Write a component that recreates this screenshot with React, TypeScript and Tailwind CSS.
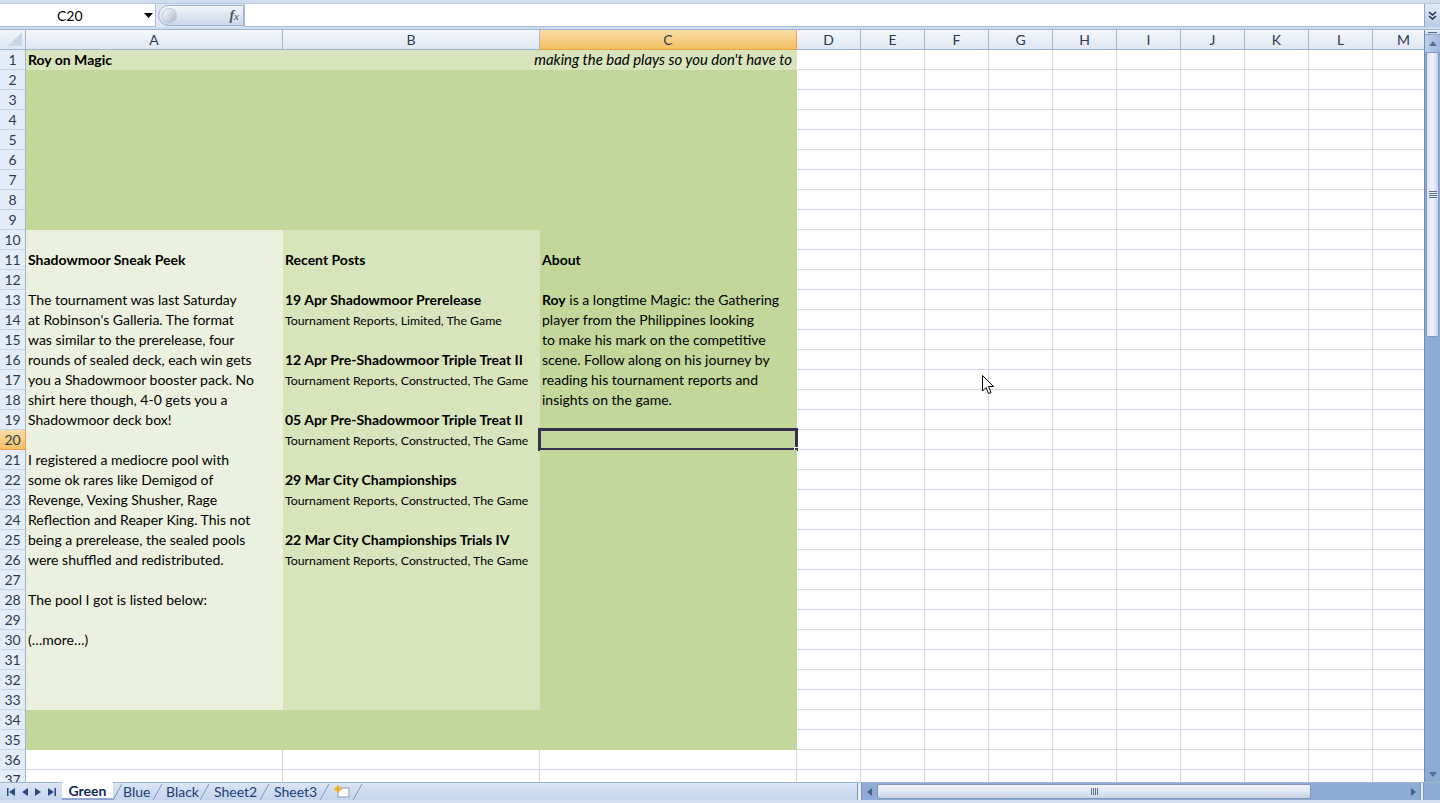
import React from "react";

type Kind = "b" | "s" | "i" | "n";
type CellDef = { k: Kind; t: React.ReactNode };
type RowDef = { A?: CellDef; B?: CellDef; C?: CellDef };

const ROWS: Record<number, RowDef> = {
  1: { A: { k: "b", t: "Roy on Magic" }, C: { k: "i", t: "making the bad plays so you don't have to" } },
  11: { A: { k: "b", t: "Shadowmoor Sneak Peek" }, B: { k: "b", t: "Recent Posts" }, C: { k: "b", t: "About" } },
  13: {
    A: { k: "n", t: "The tournament was last Saturday" },
    B: { k: "b", t: "19 Apr Shadowmoor Prerelease" },
    C: { k: "n", t: (<><span className="font-bold">Roy</span> is a longtime Magic: the Gathering</>) },
  },
  14: {
    A: { k: "n", t: "at Robinson's Galleria. The format" },
    B: { k: "s", t: "Tournament Reports, Limited, The Game" },
    C: { k: "n", t: "player from the Philippines looking" },
  },
  15: { A: { k: "n", t: "was similar to the prerelease, four" }, C: { k: "n", t: "to make his mark on the competitive" } },
  16: {
    A: { k: "n", t: "rounds of sealed deck, each win gets" },
    B: { k: "b", t: "12 Apr Pre-Shadowmoor Triple Treat II" },
    C: { k: "n", t: "scene. Follow along on his journey by" },
  },
  17: {
    A: { k: "n", t: "you a Shadowmoor booster pack. No" },
    B: { k: "s", t: "Tournament Reports, Constructed, The Game" },
    C: { k: "n", t: "reading his tournament reports and" },
  },
  18: { A: { k: "n", t: "shirt here though, 4-0 gets you a" }, C: { k: "n", t: "insights on the game." } },
  19: { A: { k: "n", t: "Shadowmoor deck box!" }, B: { k: "b", t: "05 Apr Pre-Shadowmoor Triple Treat II" } },
  20: { B: { k: "s", t: "Tournament Reports, Constructed, The Game" } },
  21: { A: { k: "n", t: "I registered a mediocre pool with" } },
  22: { A: { k: "n", t: "some ok rares like Demigod of" }, B: { k: "b", t: "29 Mar City Championships" } },
  23: { A: { k: "n", t: "Revenge, Vexing Shusher, Rage" }, B: { k: "s", t: "Tournament Reports, Constructed, The Game" } },
  24: { A: { k: "n", t: "Reflection and Reaper King. This not" } },
  25: { A: { k: "n", t: "being a prerelease, the sealed pools" }, B: { k: "b", t: "22 Mar City Championships Trials IV" } },
  26: { A: { k: "n", t: "were shuffled and redistributed." }, B: { k: "s", t: "Tournament Reports, Constructed, The Game" } },
  28: { A: { k: "n", t: "The pool I got is listed below:" } },
  30: { A: { k: "n", t: "(…more…)" } },
};

const SMALL_COLS = ["D", "E", "F", "G", "H", "I", "J", "K", "L"];

function bgFor(r: number, c: "A" | "B" | "C"): string {
  if (r === 1) return "bg-[#d8e4bc] border-[#d8e4bc]";
  if ((r >= 2 && r <= 9) || r === 34 || r === 35) return "bg-[#c4d79b] border-[#c4d79b]";
  if (r >= 10 && r <= 33) {
    if (c === "A") return "bg-[#ebf1de] border-[#ebf1de]";
    if (c === "B") return "bg-[#d8e4bc] border-[#d8e4bc]";
    return "bg-[#c4d79b] border-[#c4d79b]";
  }
  return "bg-white border-[#d0d7e5]";
}

function Txt({ d }: { d: CellDef }) {
  const cls =
    d.k === "b"
      ? "font-bold text-[14px]"
      : d.k === "s"
      ? "text-[12.3px] translate-y-[2px]"
      : d.k === "i"
      ? "italic text-[14.9px]"
      : "text-[14px]";
  return <span className={`whitespace-nowrap text-black ${cls}`}>{d.t}</span>;
}

function Corner() {
  return (
    <div className="w-[26px] shrink-0 h-full bg-gradient-to-b from-[#f3f6fb] to-[#dde6f2] border-r border-b border-[#9eb6ce] relative flex items-end justify-end p-[3px]">
      <svg width="14" height="14" viewBox="0 0 14 14">
        <polygon points="14,0 14,14 0,14" fill="#c9d6e6" />
      </svg>
    </div>
  );
}

function ColHeader() {
  return (
    <div className="flex h-[20px] text-[14px] text-[#2d3a4d]">
      <Corner />
      <div className="w-[257px] shrink-0 border-r border-b border-[#9eb6ce] bg-gradient-to-b from-[#f5f8fc] to-[#dfe7f2] flex items-center justify-center">A</div>
      <div className="w-[257px] shrink-0 border-r border-b border-[#9eb6ce] bg-gradient-to-b from-[#f5f8fc] to-[#dfe7f2] flex items-center justify-center">B</div>
      <div className="w-[257px] shrink-0 border-r border-b border-[#f29d49] bg-gradient-to-b from-[#f9dca6] to-[#f2c15f] flex items-center justify-center">C</div>
      {SMALL_COLS.map((c) => (
        <div key={c} className="w-[64px] shrink-0 border-r border-b border-[#9eb6ce] bg-gradient-to-b from-[#f5f8fc] to-[#dfe7f2] flex items-center justify-center">
          {c}
        </div>
      ))}
      <div className="flex-1 border-b border-[#9eb6ce] bg-gradient-to-b from-[#f5f8fc] to-[#dfe7f2] flex items-center justify-center pl-[10px]">M</div>
    </div>
  );
}

function Row({ r }: { r: number }) {
  const def = ROWS[r] || {};
  const selected = r === 20;
  return (
    <div className="flex h-[20px] shrink-0">
      <div
        className={
          selected
            ? "w-[26px] shrink-0 h-full border-r border-b border-[#f29d49] bg-gradient-to-b from-[#f9dca6] to-[#f2c15f] flex items-center justify-center text-[14px] text-[#2d3a4d]"
            : "w-[26px] shrink-0 h-full border-r border-b border-r-[#9eb6ce] border-b-[#c5d3e6] bg-[#e4ecf7] flex items-center justify-center text-[14px] text-[#2d3a4d]"
        }
      >
        {r}
      </div>
      <div className={`w-[257px] shrink-0 h-full border-r border-b flex items-center pl-[2px] ${bgFor(r, "A")}`}>
        {def.A && <Txt d={def.A} />}
      </div>
      <div className={`w-[257px] shrink-0 h-full border-r border-b flex items-center pl-[2px] ${bgFor(r, "B")}`}>
        {def.B && <Txt d={def.B} />}
      </div>
      <div
        className={`relative w-[257px] shrink-0 h-full border-r border-b flex items-center ${
          r === 1 ? "justify-end pr-[4px]" : "pl-[2px]"
        } ${bgFor(r, "C")}`}
      >
        {def.C && <Txt d={def.C} />}
        {selected && (
          <>
            <div className="absolute left-[-2px] top-[-2px] w-[260px] h-[23px] border-[3px] border-[#35304f]" />
            <div className="absolute left-[254px] top-[17px] w-[5px] h-[5px] bg-[#35304f] border border-white" />
          </>
        )}
      </div>
      {SMALL_COLS.map((c) => (
        <div key={c} className="w-[64px] shrink-0 h-full border-r border-b bg-white border-[#d0d7e5]" />
      ))}
      <div className="flex-1 h-full border-b bg-white border-[#d0d7e5]" />
    </div>
  );
}

function TopBar() {
  return (
    <div className="h-[30px] shrink-0 bg-[#cfddef] pt-[3px] border-b border-[#9eb6ce]">
      <div className="h-[24px] flex bg-[#dfe8f5] border-t border-[#b7c9e2]">
        <div className="w-[156px] shrink-0 bg-white border-r border-b border-[#a9bfd9] relative flex items-center">
          <span className="absolute left-[57px] text-[14px] text-black">C20</span>
          <svg className="absolute left-[144px] top-[9px]" width="9" height="5" viewBox="0 0 9 5">
            <polygon points="0,0 9,0 4.5,5" fill="#000" />
          </svg>
        </div>
        <div className="w-[88px] shrink-0 pl-[2px] py-[1px]">
          <div className="h-full rounded-l-full bg-gradient-to-b from-[#f4f7fb] to-[#c8d6e9] border border-[#9fb3cf] relative flex items-center">
            <div className="absolute left-[3px] top-[2px] w-[15px] h-[15px] rounded-full bg-gradient-to-br from-[#ffffff] to-[#aab7c9] border border-[#b9c5d6]" />
            <span className="absolute right-[4px] text-[14px] italic text-[#4a4f58]" style={{ fontFamily: '"Liberation Serif", serif' }}>
              <span className="font-bold">f</span>
              <span className="text-[11px]">x</span>
            </span>
          </div>
        </div>
        <div className="flex-1 bg-white border-l border-b border-[#a9bfd9]" />
        <div className="w-[16px] shrink-0 bg-gradient-to-b from-[#e3ecf8] to-[#b8cbe6] border-l border-[#8ea6c8] flex items-center justify-center">
          <svg width="9" height="10" viewBox="0 0 9 10">
            <polyline points="1,1 4.5,4 8,1" fill="none" stroke="#1c2d4a" strokeWidth="1.5" />
            <polyline points="1,5 4.5,8 8,5" fill="none" stroke="#1c2d4a" strokeWidth="1.5" />
          </svg>
        </div>
      </div>
    </div>
  );
}

function VScroll() {
  return (
    <div className="w-[16px] shrink-0 h-full flex flex-col bg-[#8eabd6] border-l border-[#6f8bb5]">
      <div className="h-[5px] shrink-0 bg-gradient-to-b from-[#eef3fa] to-[#c6d5ea] border-b border-[#8ea6c8] flex items-center justify-center">
        <div className="w-[9px] h-[1px] bg-[#56698a]" />
      </div>
      <div className="h-[17px] shrink-0 bg-gradient-to-r from-[#bfd0e8] to-[#9fb8de] flex items-center justify-center">
        <svg width="8" height="5" viewBox="0 0 8 5">
          <polygon points="0,5 8,5 4,0" fill="#5d6f8f" />
        </svg>
      </div>
      <div className="h-[285px] shrink-0 mx-[1px] rounded-[2px] bg-gradient-to-r from-[#dde7f5] via-[#eef3fa] to-[#c9d7ec] border border-[#8496b8] flex items-center justify-center">
        <div className="flex flex-col gap-[1px]">
          <div className="w-[8px] h-[1px] bg-[#5a6c8c]" />
          <div className="w-[8px] h-[1px] bg-[#5a6c8c]" />
          <div className="w-[8px] h-[1px] bg-[#5a6c8c]" />
          <div className="w-[8px] h-[1px] bg-[#5a6c8c]" />
        </div>
      </div>
      <div className="flex-1" />
      <div className="h-[16px] shrink-0 flex items-center justify-center">
        <svg width="8" height="5" viewBox="0 0 8 5">
          <polygon points="0,0 8,0 4,5" fill="#5d6f8f" />
        </svg>
      </div>
    </div>
  );
}

function TabSep() {
  return (
    <svg width="10" height="18" viewBox="0 0 10 18" className="shrink-0">
      <line x1="0" y1="17" x2="9" y2="1" stroke="#7f97bd" strokeWidth="1" />
    </svg>
  );
}

function BottomBar() {
  return (
    <div className="h-[18px] shrink-0 flex bg-gradient-to-b from-[#dae5f4] to-[#c4d5ed] border-t border-[#9eb6ce]">
      <div className="w-[62px] shrink-0 flex items-center justify-around px-[3px]">
        <svg width="8" height="8" viewBox="0 0 8 8"><rect x="0" y="0" width="1.5" height="8" fill="#2b4a7e" /><polygon points="8,0 8,8 2,4" fill="#2b4a7e" /></svg>
        <svg width="6" height="8" viewBox="0 0 6 8"><polygon points="6,0 6,8 0,4" fill="#2b4a7e" /></svg>
        <svg width="6" height="8" viewBox="0 0 6 8"><polygon points="0,0 0,8 6,4" fill="#2b4a7e" /></svg>
        <svg width="8" height="8" viewBox="0 0 8 8"><polygon points="0,0 0,8 6,4" fill="#2b4a7e" /><rect x="6.5" y="0" width="1.5" height="8" fill="#2b4a7e" /></svg>
      </div>
      <div className="w-[795px] shrink-0 flex items-stretch text-[14px] text-[#1d3d75]">
        <div className="w-[51px] shrink-0 bg-white flex items-center justify-center font-bold text-[#0f2a58] border-b-2 border-[#8ea7cf] -mt-[1px]">Green</div>
        <TabSep />
        <div className="w-[30px] shrink-0 flex items-center">Blue</div>
        <TabSep />
        <div className="w-[37px] shrink-0 flex items-center pl-[3px]">Black</div>
        <TabSep />
        <div className="w-[50px] shrink-0 flex items-center pl-[4px]">Sheet2</div>
        <TabSep />
        <div className="w-[50px] shrink-0 flex items-center pl-[4px]">Sheet3</div>
        <TabSep />
        <div className="w-[23px] shrink-0 flex items-center justify-center">
          <svg width="16" height="13" viewBox="0 0 16 13">
            <rect x="4" y="3" width="11" height="9" fill="#ffffff" stroke="#8a9ab5" />
            <circle cx="4" cy="4" r="3" fill="#f6c84a" />
            <line x1="4" y1="0" x2="4" y2="8" stroke="#e0a020" strokeWidth="1" />
            <line x1="0" y1="4" x2="8" y2="4" stroke="#e0a020" strokeWidth="1" />
          </svg>
        </div>
        <TabSep />
        <div className="flex-1" />
      </div>
      <div className="flex-1 flex items-stretch bg-[#8eabd6]">
        <div className="w-[5px] shrink-0 bg-[#e7eef8] border-x border-[#7e95b8]" />
        <div className="w-[15px] shrink-0 flex items-center justify-center">
          <svg width="5" height="8" viewBox="0 0 5 8"><polygon points="5,0 5,8 0,4" fill="#4d5f80" /></svg>
        </div>
        <div className="w-[434px] shrink-0 my-[1px] rounded-[2px] bg-gradient-to-b from-[#f0f4fa] via-[#dfe7f3] to-[#c6d4e9] border border-[#8496b8] flex items-center justify-center">
          <div className="flex gap-[1px]">
            <div className="w-[1px] h-[7px] bg-[#5a6c8c]" />
            <div className="w-[1px] h-[7px] bg-[#5a6c8c]" />
            <div className="w-[1px] h-[7px] bg-[#5a6c8c]" />
            <div className="w-[1px] h-[7px] bg-[#5a6c8c]" />
          </div>
        </div>
        <div className="flex-1" />
        <div className="w-[14px] shrink-0 flex items-center justify-center">
          <svg width="5" height="8" viewBox="0 0 5 8"><polygon points="0,0 0,8 5,4" fill="#4d5f80" /></svg>
        </div>
        <div className="w-[4px] shrink-0 bg-[#e7eef8] border-x border-[#7e95b8]" />
        <div className="w-[16px] shrink-0 bg-[#8eabd6]" />
      </div>
    </div>
  );
}

export default function App() {
  const rows = Array.from({ length: 37 }, (_, i) => i + 1);
  return (
    <div
      className="relative w-[1440px] h-[803px] overflow-hidden flex flex-col bg-white"
      style={{ fontFamily: 'Lato, "Open Sans", sans-serif' }}
    >
      <TopBar />
      <div className="flex h-[752px] shrink-0">
        <div className="flex-1 overflow-hidden flex flex-col">
          <ColHeader />
          {rows.map((r) => (
            <Row key={r} r={r} />
          ))}
        </div>
        <VScroll />
      </div>
      <BottomBar />
      <div className="h-[3px] shrink-0 bg-[#d3e0f1]" />
      <svg className="absolute left-[982px] top-[375px]" width="13" height="21" viewBox="0 0 13 21">
        <path d="M0.5 0.5 L0.5 16 L4 12.5 L6.5 18.5 L9 17.5 L6.5 11.5 L11.5 11.5 Z" fill="#ffffff" stroke="#000000" strokeWidth="1" strokeLinejoin="miter" />
      </svg>
    </div>
  );
}
